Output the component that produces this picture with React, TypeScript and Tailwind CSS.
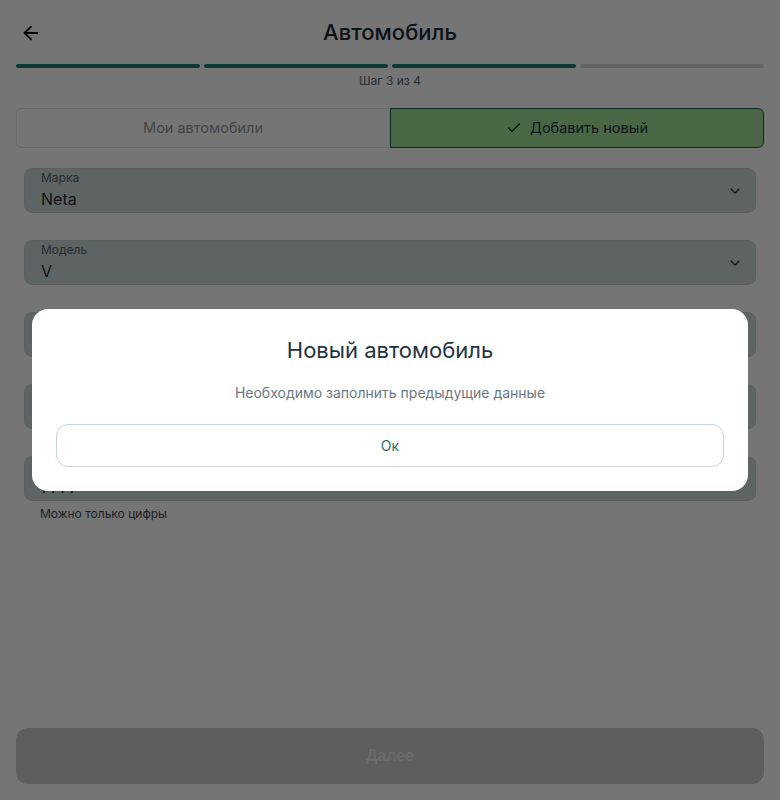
import { ArrowLeft, Check, ChevronDown } from "lucide-react";

const fields = [
  { label: "Марка", value: "Neta", select: true },
  { label: "Модель", value: "V", select: true },
  { label: "Год выпуска", value: "2023", select: true },
  { label: "Цвет", value: "Белый", select: true },
  { label: "Пробег, км", value: "7777", select: false },
];

export default function App() {
  return (
    <div
      className="relative h-[800px] w-[780px] overflow-hidden bg-white text-[#1c2b36]"
      style={{ fontFamily: "Inter, 'Noto Sans', sans-serif" }}
    >
      <div className="flex h-full flex-col px-4 pb-4">
        <header className="relative flex h-16 items-center justify-center">
          <button className="absolute left-1 top-[22px] text-black">
            <ArrowLeft size={22} strokeWidth={2} />
          </button>
          <h1 className="text-[22px] font-medium text-[#1c2b36]">Автомобиль</h1>
        </header>

        <div className="grid grid-cols-4 gap-1">
          <div className="h-1 rounded-full bg-[#1f7e72]" />
          <div className="h-1 rounded-full bg-[#1f7e72]" />
          <div className="h-1 rounded-full bg-[#1f7e72]" />
          <div className="h-1 rounded-full bg-[#cfd8d8]" />
        </div>
        <p className="mt-[5px] text-center text-xs text-[#5b6770]">Шаг 3 из 4</p>

        <div className="mt-[19px] grid h-10 grid-cols-2">
          <button className="rounded-l-md border border-[#dfe6e6] bg-white text-[14.5px] text-[#8e979d]">
            Мои автомобили
          </button>
          <button className="flex items-center justify-center gap-2 rounded-r-md border border-[#1b5a4f] bg-[#a0e196] text-[14.5px] text-[#1c2b36]">
            <Check size={16} strokeWidth={2} />
            Добавить новый
          </button>
        </div>

        <div className="mt-5 flex flex-col gap-[27px] px-2">
          {fields.map((f, i) => (
            <div key={f.label} className="relative">
              <div className="flex h-[45px] items-center rounded-lg border border-[#c6d2d2] bg-[#cdd8d7] pl-4 pr-3">
                <div className="flex-1 leading-none">
                  <div className="text-xs text-[#56626a]">{f.label}</div>
                  <div className="mt-[1px] text-base text-[#1c2b36]">{f.value}</div>
                </div>
                {f.select && <ChevronDown size={16} strokeWidth={2} className="text-[#2b3640]" />}
              </div>
              {i === fields.length - 1 && (
                <p className="absolute left-4 top-[50px] text-xs text-[#3d474e]">Можно только цифры</p>
              )}
            </div>
          ))}
        </div>

        <div className="flex-1" />

        <button
          className="h-14 rounded-xl bg-[#ccced2] text-base font-bold text-[#e4e6e9]"
          style={{ fontFamily: "'Liberation Sans', Arial, sans-serif" }}
        >
          Далее
        </button>
      </div>

      <div className="absolute inset-0 bg-black/[0.54]" />

      <div className="absolute left-8 right-8 top-[309px] rounded-2xl bg-white px-6 pb-6 pt-[27px] text-center">
        <h2 className="text-[22px] leading-7 text-[#1e3342]">Новый автомобиль</h2>
        <p className="mt-[19px] text-sm text-[#6b7882]">Необходимо заполнить предыдущие данные</p>
        <button className="mt-[21px] h-[43px] w-full rounded-xl border border-[#c8d3da] text-sm text-[#1f6a5f]">
          Ок
        </button>
      </div>
    </div>
  );
}
